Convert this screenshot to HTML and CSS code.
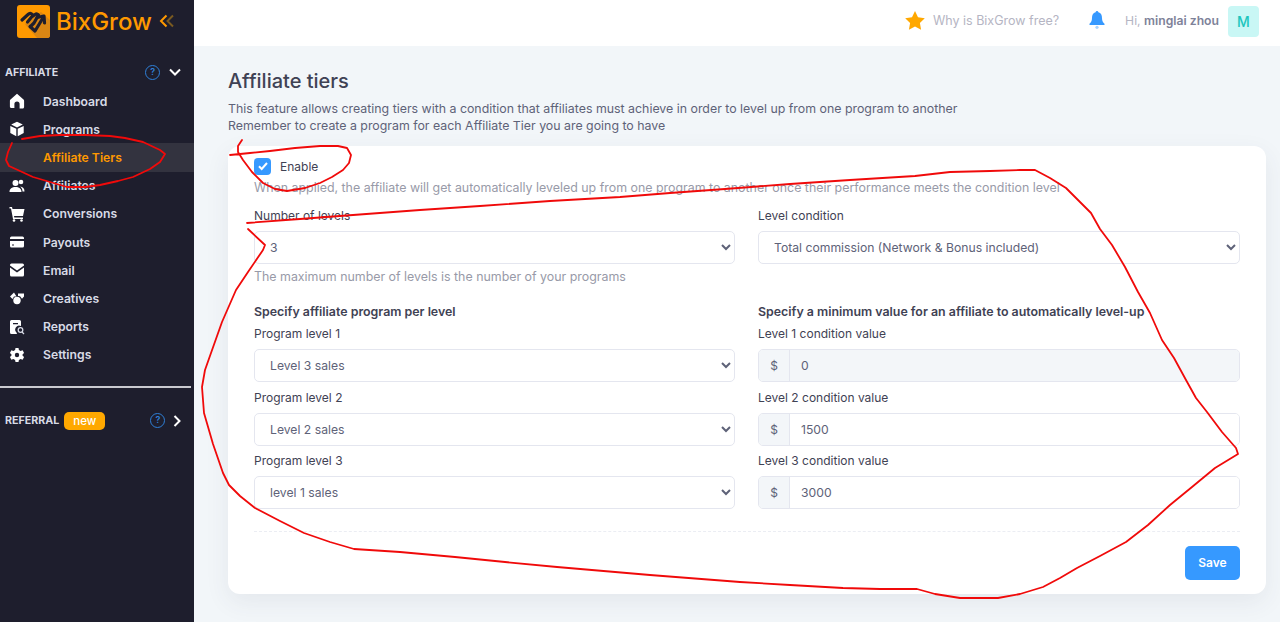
FILE: index.html
```html
<!DOCTYPE html>
<html lang="en">
<head>
  <meta charset="UTF-8" />
  <title>Affiliate tiers</title>
  <link rel="stylesheet" href="styles.css">
</head>
<body>

<aside class="sidebar">
  <div class="logo">
    <svg class="logo-mark" width="33" height="33" viewBox="0 0 33 33">
      <rect width="33" height="33" rx="3" fill="#ff9900"/>
      <path d="M33 15V30a3 3 0 0 1-3 3H20L8 19 24 7z" fill="#d98614"/>
      <g fill="none" stroke="#1e1e2d" stroke-width="3.200" stroke-linecap="round" stroke-linejoin="round">
        <path d="M5 15 11 9.500c2-2 4-1 5 .8L10.500 17"/>
        <path d="M16 11 18 9.500c1.500-1 3-.5 3.500.5L17 18l-3.500 3.500"/>
        <path d="M13 21.500 18 26l7-11.500"/>
        <path d="M20 12.500 27 11l.5 7"/>
      </g>
    </svg>
    <span class="logo-text">BixGrow</span>
    <svg width="16" height="14" viewBox="0 0 16 14" fill="none" stroke-width="2">
      <path d="M7.5 1.500 2 7l5.500 5.500" stroke="#ff9900"/>
      <path d="M14 1.500 8.500 7l5.500 5.500" stroke="#7a5a20"/>
    </svg>
  </div>

  <div class="section-head">
    <span class="section-title">AFFILIATE</span>
    <span class="help">?</span>
    <svg class="caret" width="12" height="8" viewBox="0 0 12 8" fill="none" stroke="#fff" stroke-width="2"><path d="M1 1.500 6 6.500 11 1.500"/></svg>
  </div>

  <nav class="menu">
    <a class="menu-item">
      <svg viewBox="0 0 16 16"><path d="M8 .8 1.500 6.500c-.4.4-.6.800-.6 1.300v5.700c0 .8.600 1.500 1.500 1.500h3V11a2.600 2.600 0 0 1 5.200 0v4.500h3c.9 0 1.500-.7 1.500-1.500V7.800c0-.5-.2-.9-.6-1.300z"/></svg>
      Dashboard
    </a>
    <a class="menu-item">
      <svg viewBox="0 0 16 16"><path d="M8 .8 2.200 3.600 8 6.400l5.800-2.800zM1.300 4.900v7.200L7.300 15.200V7.700zM14.700 4.900 8.700 7.700v7.500l6-3.100z"/></svg>
      Programs
    </a>
    <a class="menu-item active">Affiliate Tiers</a>
    <a class="menu-item">
      <svg viewBox="0 0 16 16"><circle cx="6.500" cy="5" r="3"/><circle cx="12" cy="4" r="2.300"/><path d="M.5 14c0-3.500 2.500-5 6-5s6 1.500 6 5zM13.500 13.500H15.500c0-2.800-1.500-5-4.500-5 1.800 1 2.500 3 2.500 5z"/></svg>
      Affiliates
    </a>
    <a class="menu-item">
      <svg viewBox="0 0 16 16"><path d="M.5 1H3l.5 2H15.500l-1.500 7H5l.3 1.500H14V13H4L2 2.500H.5z"/><circle cx="5" cy="14.500" r="1.300"/><circle cx="12.500" cy="14.500" r="1.300"/></svg>
      Conversions
    </a>
    <a class="menu-item">
      <svg viewBox="0 0 16 16"><path d="M2.500 2.500h11A1.500 1.500 0 0 1 15 4v1H1V4a1.500 1.500 0 0 1 1.500-1.500zM1 7h14v5a1.500 1.500 0 0 1-1.500 1.500h-11A1.500 1.500 0 0 1 1 12zm2 3.500v1h2v-1z"/></svg>
      Payouts
    </a>
    <a class="menu-item">
      <svg viewBox="0 0 16 16"><path d="M2.500 1.500h11A1.500 1.500 0 0 1 15 3v.5L8 8.500 1 3.500V3a1.500 1.500 0 0 1 1.500-1.500zM1 5.500l7 5 7-5V13a1.500 1.500 0 0 1-1.500 1.500h-11A1.500 1.500 0 0 1 1 13z"/></svg>
      Email
    </a>
    <a class="menu-item">
      <svg viewBox="0 0 16 16"><circle cx="8" cy="10.500" r="3.700"/><path d="M5 2.500 7.500 6.500H5L3.500 9 1 6.500zM9 3.500h6v3l-2 2.300L11 6.300 9 6z"/></svg>
      Creatives
    </a>
    <a class="menu-item">
      <svg viewBox="0 0 16 16"><path d="M2.500 1h8A1.500 1.500 0 0 1 12 2.500V7a4 4 0 0 0-4.500 6.500l.5 1.500H2.500A1.500 1.500 0 0 1 1 13.500v-11A1.500 1.500 0 0 1 2.500 1zM4 4v1.300h5V4z"/><circle cx="11.500" cy="11" r="2.300" fill="none" stroke="#d8dbe6" stroke-width="1.300"/><path d="m13 13 2 2" stroke="#d8dbe6" stroke-width="1.300"/></svg>
      Reports
    </a>
    <a class="menu-item">
      <svg viewBox="0 0 16 16"><path fill-rule="evenodd" d="M6.500 1h3l.4 2 1.700 1 2-.7 1.500 2.600-1.500 1.400v1.400l1.500 1.400-1.500 2.600-2-.7-1.700 1-.4 2h-3l-.4-2-1.700-1-2 .7L.9 10.100l1.500-1.400V7.300L.9 5.900l1.500-2.600 2 .7 1.700-1zM8 5.800a2.200 2.200 0 1 0 0 4.400 2.200 2.200 0 0 0 0-4.400z"/></svg>
      Settings
    </a>
  </nav>

  <hr class="side-rule">

  <div class="section-head referral">
    <span class="section-title">REFERRAL</span>
    <span class="badge-new">new</span>
    <span class="help">?</span>
    <svg class="caret" width="8" height="12" viewBox="0 0 8 12" fill="none" stroke="#fff" stroke-width="2"><path d="M1.500 1 6.500 6 1.500 11"/></svg>
  </div>
</aside>

<div class="page">
  <header class="topbar">
    <svg class="star" width="20" height="19" viewBox="0 0 20 19"><path d="M10 0l3 6.200 6.800 1-4.900 4.700 1.200 6.800L10 15.500l-6.100 3.200 1.200-6.800L.2 7.200l6.800-1z" fill="#ffa800"/></svg>
    <span class="why">Why is BixGrow free?</span>
    <svg class="bell" width="16" height="18" viewBox="0 0 16 18"><path d="M8 0a1.500 1.500 0 0 1 1.400 1.300C12 2 13 4 13 7c0 3 1 4.500 2.500 5.800V14H.5v-1.200C2 11.500 3 10 3 7c0-3 1-5 3.600-5.700A1.500 1.500 0 0 1 8 0z" fill="#3699ff"/><circle cx="8" cy="16.300" r="1.600" fill="#a9d3ff"/></svg>
    <span class="hi">Hi, <b>minglai zhou</b></span>
    <span class="avatar">M</span>
  </header>

  <main class="content">
    <h1>Affiliate tiers</h1>
    <p class="intro">This feature allows creating tiers with a condition that affiliates must achieve in order to level up from one program to another<br>Remember to create a program for each Affiliate Tier you are going to have</p>

    <section class="card">
      <div class="enable">
        <span class="check"><svg width="12" height="10" viewBox="0 0 12 10" fill="none" stroke="#fff" stroke-width="2"><path d="M2 5.200 4.700 8 10 2"/></svg></span>
        Enable
      </div>
      <p class="hint">When applied, the affiliate will get automatically leveled up from one program to another once their performance meets the condition level</p>

      <div class="two-col top-row">
        <div>
          <label class="field-label">Number of levels</label>
          <select class="control"><option>3</option></select>
          <p class="hint under">The maximum number of levels is the number of your programs</p>
        </div>
        <div>
          <label class="field-label">Level condition</label>
          <select class="control"><option>Total commission (Network &amp; Bonus included)</option></select>
        </div>
      </div>

      <div class="two-col">
        <div>
          <h2>Specify affiliate program per level</h2>
          <div class="field">
            <label class="field-label">Program level 1</label>
            <select class="control"><option>Level 3 sales</option></select>
          </div>
          <div class="field">
            <label class="field-label">Program level 2</label>
            <select class="control"><option>Level 2 sales</option></select>
          </div>
          <div class="field">
            <label class="field-label">Program level 3</label>
            <select class="control"><option>level 1 sales</option></select>
          </div>
        </div>
        <div>
          <h2>Specify a minimum value for an affiliate to automatically level-up</h2>
          <div class="field">
            <label class="field-label">Level 1 condition value</label>
            <div class="input-group disabled"><span class="addon">$</span><input class="amount" value="0" disabled></div>
          </div>
          <div class="field">
            <label class="field-label">Level 2 condition value</label>
            <div class="input-group"><span class="addon">$</span><input class="amount" value="1500"></div>
          </div>
          <div class="field">
            <label class="field-label">Level 3 condition value</label>
            <div class="input-group"><span class="addon">$</span><input class="amount" value="3000"></div>
          </div>
        </div>
      </div>

      <div class="card-foot">
        <button class="save">Save</button>
      </div>
    </section>
  </main>
</div>

<!-- hand drawn red marks on top of the screenshot -->
<svg class="marks" width="1280" height="622" viewBox="0 0 1280 622" fill="none" stroke="#f00a0a" stroke-width="1.800" stroke-linejoin="round" stroke-linecap="round">
  <polyline points="12,143 8,152 6,160 9,166 20,171 33,177 50,182 67,187 85,187 100,185 118,181 133,177 150,169 160,162 165,154 160,150 143,142 125,138 110,136 85,135 60,135 40,136 22,139"/>
  <polyline points="230,155 250,153 270,151 295,148 320,146 338,146 347,148 351,155 349,163 343,170 332,177 320,183 305,188 287,191 275,189 263,183 252,172 243,160 238,152 238,146 242,140"/>
  <polyline points="247,223 300,219 353,215 420,210 480,206 550,201 620,197 670,193 725,189 790,184 850,180 915,176 950,172 990,171 1020,170 1035,170 1050,178 1066,188 1080,202 1091,213 1100,229 1112,245 1125,267 1138,292 1150,313 1162,340 1174,358 1186,380 1196,398 1207,412 1222,432 1236,448 1238,454 1215,468 1192,487 1170,505 1148,525 1126,542 1100,556 1077,568 1060,578 1043,587 1020,594 998,598 960,598 935,594 917,589 880,589 843,588 790,585 740,582 650,575 557,567 505,562 455,557 400,552 354,549 330,542 304,533 280,521 255,508 240,496 229,485 223,473 213,444 204,413 202,387 205,370 211,353 222,322 236,290 248,272 263,250 265,245 248,229"/>
</svg>

</body>
</html>
```
FILE: styles.css
```css
* {
  box-sizing: border-box;
  margin: 0;
  padding: 0;
}

html, body {
  height: 622px;
  overflow: hidden;
}

body {
  display: flex;
  position: relative;
  font-family: "Inter", "Open Sans", sans-serif;
  font-size: 12px;
  color: #3f4254;
  background: #f2f6f9;
}

/* Sidebar */
.sidebar {
  width: 194px;
  flex-shrink: 0;
  background: #1e1e2d;
  color: #d8dbe6;
}

.logo {
  display: flex;
  align-items: center;
  height: 42px;
  padding-left: 17px;
}

.logo-text {
  margin-left: 6px;
  margin-right: 7px;
  font-size: 24px;
  font-weight: 500;
  color: #ff9900;
}

.section-head {
  display: flex;
  align-items: center;
  height: 20px;
  margin-top: 20px;
  padding-left: 5px;
}

.section-title {
  font-size: 10.700px;
  font-weight: 700;
  color: #d8dbe6;
}

.help {
  width: 15px;
  height: 15px;
  margin-left: 87px;
  border: 1.500px solid #2f80d8;
  border-radius: 50%;
  font-size: 9px;
  font-weight: 600;
  line-height: 12px;
  text-align: center;
  color: #2f80d8;
}

.caret {
  margin-left: 9px;
}

.menu {
  margin-top: 5px;
}

.menu-item {
  display: flex;
  align-items: center;
  height: 28.200px;
  padding-left: 43px;
  position: relative;
  font-size: 12.200px;
  font-weight: 600;
  color: #d8dbe6;
}

.menu-item svg {
  position: absolute;
  left: 9px;
  top: 6px;
  width: 16px;
  height: 16px;
  fill: #fff;
}

.menu-item.active {
  background: #33333f;
  color: #ff9900;
}

.side-rule {
  height: 2px;
  width: 191px;
  margin-top: 17px;
  border: 0;
  background: #c9c9cf;
}

.referral {
  margin-top: 23px;
}

.badge-new {
  margin-left: 5px;
  padding: 0 9px;
  height: 18px;
  line-height: 18px;
  border-radius: 5px;
  background: #ffa800;
  color: #fff;
  font-size: 11.500px;
  font-weight: 500;
}

.referral .help {
  margin-left: 45px;
}

.referral .caret {
  margin-left: 8px;
}

/* Top bar */
.page {
  flex: 1;
  min-width: 0;
}

.topbar {
  display: flex;
  align-items: center;
  justify-content: flex-end;
  height: 46px;
  padding: 0 21px 3px 0;
  background: #fff;
}

.star,
.why,
.bell,
.hi {
  margin-bottom: 3px;
}

.why {
  margin-left: 8px;
  font-size: 12.500px;
  color: #b5b5c3;
}

.bell {
  margin-left: 30px;
}

.hi {
  margin-left: 20px;
  font-size: 12.200px;
  color: #b5b5c3;
}

.hi b {
  font-weight: 600;
  color: #7e8299;
}

.avatar {
  width: 31px;
  height: 31px;
  margin-left: 9px;
  border-radius: 4px;
  background: #c9f7f5;
  color: #1bc5bd;
  font-size: 14px;
  font-weight: 500;
  line-height: 31px;
  text-align: center;
}

/* Content */
.content {
  padding: 21px 14px 0 34px;
}

h1 {
  font-size: 20px;
  font-weight: 500;
  line-height: 28px;
  color: #3f4254;
}

.intro {
  margin-top: 5px;
  font-size: 12.370px;
  line-height: 17px;
  color: #5e6278;
}

.card {
  height: 448px;
  margin-top: 12px;
  padding: 11px 26px 0;
  background: #fff;
  border-radius: 12px;
  box-shadow: 0 8px 24px rgba(60, 70, 90, 0.08);
}

.enable {
  display: flex;
  align-items: center;
  gap: 9px;
  height: 18px;
  font-size: 12px;
  color: #3f4254;
}

.check {
  display: flex;
  align-items: center;
  justify-content: center;
  width: 17px;
  height: 17px;
  border-radius: 4px;
  background: #3699ff;
}

.hint {
  margin-top: 4px;
  font-size: 12.400px;
  line-height: 18px;
  color: #989aa8;
}

.two-col {
  display: grid;
  grid-template-columns: 481px 482px;
  column-gap: 23px;
}

.top-row {
  margin-top: 10px;
  height: 96px;
}

h2 {
  font-size: 12.400px;
  font-weight: 600;
  line-height: 17px;
  color: #3f4254;
}

.field {
  margin-top: 5px;
  height: 58.500px;
}

.field-label {
  display: block;
  margin-bottom: 6px;
  font-size: 12px;
  line-height: 18px;
  color: #3f4254;
}

.control {
  display: block;
  width: 100%;
  height: 33px;
  padding-left: 11px;
  border: 1px solid #e4e6ef;
  border-radius: 5px;
  background: #fff;
  font-family: inherit;
  font-size: 12.200px;
  color: #5e6278;
}

.input-group {
  display: flex;
  height: 33px;
  border: 1px solid #e4e6ef;
  border-radius: 5px;
  overflow: hidden;
}

.addon {
  width: 31px;
  flex-shrink: 0;
  border-right: 1px solid #e4e6ef;
  background: #f3f6f9;
  line-height: 31px;
  text-align: center;
  color: #5e6278;
}

.amount {
  flex: 1;
  min-width: 0;
  padding-left: 11px;
  border: 0;
  outline: 0;
  background: #fff;
  font-family: inherit;
  font-size: 12.200px;
  color: #5e6278;
}

.input-group.disabled .amount {
  background: #f3f6f9;
}

.card-foot {
  display: flex;
  justify-content: flex-end;
  margin-top: 20px;
  padding-top: 14px;
  border-top: 1px dashed #ebedf3;
}

.save {
  width: 55px;
  height: 34px;
  border: 0;
  border-radius: 5px;
  background: #3699ff;
  color: #fff;
  font-family: inherit;
  font-size: 12px;
  font-weight: 600;
}

.marks {
  position: absolute;
  top: 0;
  left: 0;
  pointer-events: none;
}
```
